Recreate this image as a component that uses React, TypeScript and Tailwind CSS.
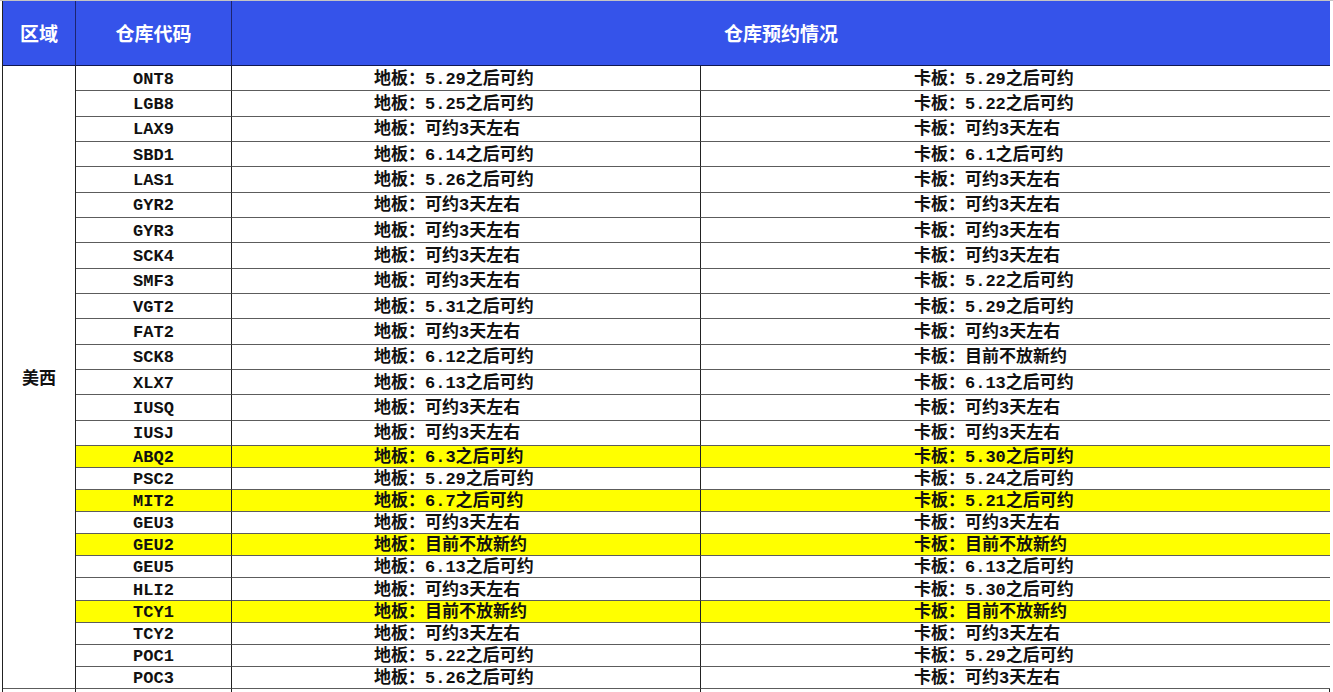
import { FunctionComponent } from "react";

type Row = {
  code: string;
  floor: string;
  pallet: string;
  hot?: boolean;
};

const rows: Row[] = [
  { code: "ONT8", floor: "地板：5.29之后可约", pallet: "卡板：5.29之后可约" },
  { code: "LGB8", floor: "地板：5.25之后可约", pallet: "卡板：5.22之后可约" },
  { code: "LAX9", floor: "地板：可约3天左右", pallet: "卡板：可约3天左右" },
  { code: "SBD1", floor: "地板：6.14之后可约", pallet: "卡板：6.1之后可约" },
  { code: "LAS1", floor: "地板：5.26之后可约", pallet: "卡板：可约3天左右" },
  { code: "GYR2", floor: "地板：可约3天左右", pallet: "卡板：可约3天左右" },
  { code: "GYR3", floor: "地板：可约3天左右", pallet: "卡板：可约3天左右" },
  { code: "SCK4", floor: "地板：可约3天左右", pallet: "卡板：可约3天左右" },
  { code: "SMF3", floor: "地板：可约3天左右", pallet: "卡板：5.22之后可约" },
  { code: "VGT2", floor: "地板：5.31之后可约", pallet: "卡板：5.29之后可约" },
  { code: "FAT2", floor: "地板：可约3天左右", pallet: "卡板：可约3天左右" },
  { code: "SCK8", floor: "地板：6.12之后可约", pallet: "卡板：目前不放新约" },
  { code: "XLX7", floor: "地板：6.13之后可约", pallet: "卡板：6.13之后可约" },
  { code: "IUSQ", floor: "地板：可约3天左右", pallet: "卡板：可约3天左右" },
  { code: "IUSJ", floor: "地板：可约3天左右", pallet: "卡板：可约3天左右" },
  { code: "ABQ2", floor: "地板：6.3之后可约", pallet: "卡板：5.30之后可约", hot: true },
  { code: "PSC2", floor: "地板：5.29之后可约", pallet: "卡板：5.24之后可约" },
  { code: "MIT2", floor: "地板：6.7之后可约", pallet: "卡板：5.21之后可约", hot: true },
  { code: "GEU3", floor: "地板：可约3天左右", pallet: "卡板：可约3天左右" },
  { code: "GEU2", floor: "地板：目前不放新约", pallet: "卡板：目前不放新约", hot: true },
  { code: "GEU5", floor: "地板：6.13之后可约", pallet: "卡板：6.13之后可约" },
  { code: "HLI2", floor: "地板：可约3天左右", pallet: "卡板：5.30之后可约" },
  { code: "TCY1", floor: "地板：目前不放新约", pallet: "卡板：目前不放新约", hot: true },
  { code: "TCY2", floor: "地板：可约3天左右", pallet: "卡板：可约3天左右" },
  { code: "POC1", floor: "地板：5.22之后可约", pallet: "卡板：5.29之后可约" },
  { code: "POC3", floor: "地板：5.26之后可约", pallet: "卡板：可约3天左右" },
];

const App: FunctionComponent = (): JSX.Element => {
  return (
    <div className="relative w-[1333px] h-[692px] overflow-hidden bg-white border-t border-[#c4c4c4]">
      <div className="ml-[2px] w-[1328px] border-l border-[#222] border-r grid grid-cols-[73px_156px_469px_629px] font-['Liberation_Mono','Noto_Sans_CJK_SC',monospace] font-bold text-[17px] text-[#111]">
        {/* header */}
        <div className="h-[65px] bg-[#3553ea] border-r border-b border-r-[#1c2470] border-b-[#101850] flex items-center justify-center text-white text-[19px] font-['Noto_Sans_CJK_SC',sans-serif]">
          区域
        </div>
        <div className="h-[65px] bg-[#3553ea] border-r border-b border-r-[#1c2470] border-b-[#101850] flex items-center justify-center text-white text-[19px] font-['Noto_Sans_CJK_SC',sans-serif]">
          仓库代码
        </div>
        <div className="col-span-2 h-[65px] bg-[#3553ea] border-b border-b-[#101850] flex items-center justify-center text-white text-[19px] font-['Noto_Sans_CJK_SC',sans-serif]">
          仓库预约情况
        </div>

        {/* merged region cell */}
        <div className="row-span-26 border-r border-b border-r-[#222] border-b-[#5c5c5c] flex items-center justify-center font-['Noto_Sans_CJK_SC',sans-serif]">
          美西
        </div>

        {rows.map((r, i) => {
          const h = i < 15 ? "h-[25.33px]" : "h-[22.1px]";
          const bg = r.hot ? "bg-[#ffff00]" : "bg-white";
          return (
            <div key={r.code + i} className="contents">
              <div
                className={`${h} ${bg} border-r border-b border-r-[#222] border-b-[#5c5c5c] flex items-center justify-center pt-[2px] leading-none`}
              >
                {r.code}
              </div>
              <div
                className={`${h} ${bg} border-r border-b border-r-[#222] border-b-[#5c5c5c] flex items-center pl-[142px] pt-[2px] leading-none whitespace-nowrap`}
              >
                {r.floor}
              </div>
              <div
                className={`${h} ${bg} border-b border-b-[#5c5c5c] flex items-center pl-[213px] pt-[2px] leading-none whitespace-nowrap`}
              >
                {r.pallet}
              </div>
            </div>
          );
        })}

        {/* next row, cut off by the window */}
        <div className="h-[20px] border-r border-r-[#222]" />
        <div className="h-[20px] border-r border-r-[#222]" />
        <div className="h-[20px] border-r border-r-[#222]" />
        <div className="h-[20px]" />
      </div>
    </div>
  );
};

export default App;
